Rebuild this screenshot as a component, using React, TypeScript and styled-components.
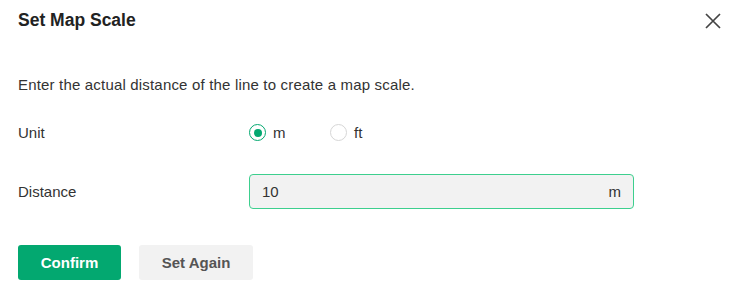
import React, { useState } from "react";
import styled, { createGlobalStyle } from "styled-components";

const Global = createGlobalStyle`
  body {
    margin: 0;
    background: #fff;
    font-family: "Liberation Sans", Arial, sans-serif;
    color: #333;
  }
`;

const Dialog = styled.div`
  width: 737px;
  height: 302px;
  box-sizing: border-box;
  padding: 0 16px 0 18px;
`;

const Header = styled.div`
  display: flex;
  justify-content: space-between;
  align-items: center;
  height: 40px;
`;

const Title = styled.h2`
  margin: 0;
  font-size: 17.5px;
  font-weight: bold;
  color: #222;
`;

const CloseButton = styled.button`
  border: none;
  background: none;
  padding: 0;
  width: 16px;
  height: 16px;
  display: flex;
  cursor: pointer;
  margin-top: 1px;
`;

const Description = styled.p`
  margin: 35px 0 20px;
  font-size: 15px;
  letter-spacing: 0.18px;
  line-height: 20px;
`;

const FormRow = styled.div<{ $gap: number }>`
  display: grid;
  grid-template-columns: 231px 385px;
  align-items: center;
  height: 35px;
  margin-bottom: ${(p) => p.$gap}px;
`;

const Label = styled.span`
  font-size: 15px;
`;

const RadioGroup = styled.div`
  display: flex;
`;

const RadioOption = styled.label`
  display: flex;
  align-items: center;
  width: 81px;
  font-size: 15px;
  cursor: pointer;
`;

const RadioCircle = styled.span<{ $checked: boolean }>`
  width: 17px;
  height: 17px;
  box-sizing: border-box;
  border-radius: 50%;
  border: 1px solid ${(p) => (p.$checked ? "#03a870" : "#d6d6d6")};
  margin-right: 7px;
  display: flex;
  align-items: center;
  justify-content: center;
  &::after {
    content: "";
    width: 8px;
    height: 8px;
    border-radius: 50%;
    background: #03a870;
    display: ${(p) => (p.$checked ? "block" : "none")};
  }
`;

const InputBox = styled.div`
  display: flex;
  align-items: center;
  height: 35px;
  box-sizing: border-box;
  border: 1px solid #3dcf8e;
  border-radius: 4px;
  background: #f2f2f2;
  padding: 0 12px 0 12px;
  font-size: 15px;
`;

const Input = styled.input`
  flex: 1;
  border: none;
  background: transparent;
  outline: none;
  font: inherit;
  color: #333;
  padding: 0;
`;

const Footer = styled.div`
  display: flex;
  gap: 18px;
`;

const Button = styled.button<{ $primary?: boolean }>`
  height: 35px;
  padding: 0;
  border: none;
  border-radius: 3px;
  font-family: inherit;
  font-size: 15px;
  font-weight: bold;
  cursor: pointer;
  background: ${(p) => (p.$primary ? "#03a870" : "#f2f2f2")};
  color: ${(p) => (p.$primary ? "#fff" : "#555")};
  width: ${(p) => (p.$primary ? "103px" : "114px")};
`;

export default function App() {
  const [unit, setUnit] = useState("m");
  const [distance, setDistance] = useState("10");
  return (
    <>
      <Global />
      <Dialog>
        <Header>
          <Title>Set Map Scale</Title>
          <CloseButton aria-label="Close">
            <svg width="16" height="16" viewBox="0 0 16 16">
              <path d="M1 1L15 15M15 1L1 15" stroke="#444" strokeWidth="1.7" />
            </svg>
          </CloseButton>
        </Header>
        <Description>Enter the actual distance of the line to create a map scale.</Description>
        <FormRow $gap={24}>
          <Label>Unit</Label>
          <RadioGroup>
            {["m", "ft"].map((u) => (
              <RadioOption key={u} onClick={() => setUnit(u)}>
                <RadioCircle $checked={unit === u} />
                {u}
              </RadioOption>
            ))}
          </RadioGroup>
        </FormRow>
        <FormRow $gap={36}>
          <Label>Distance</Label>
          <InputBox>
            <Input value={distance} onChange={(e) => setDistance(e.target.value)} />
            <span>{unit}</span>
          </InputBox>
        </FormRow>
        <Footer>
          <Button $primary>Confirm</Button>
          <Button>Set Again</Button>
        </Footer>
      </Dialog>
    </>
  );
}
